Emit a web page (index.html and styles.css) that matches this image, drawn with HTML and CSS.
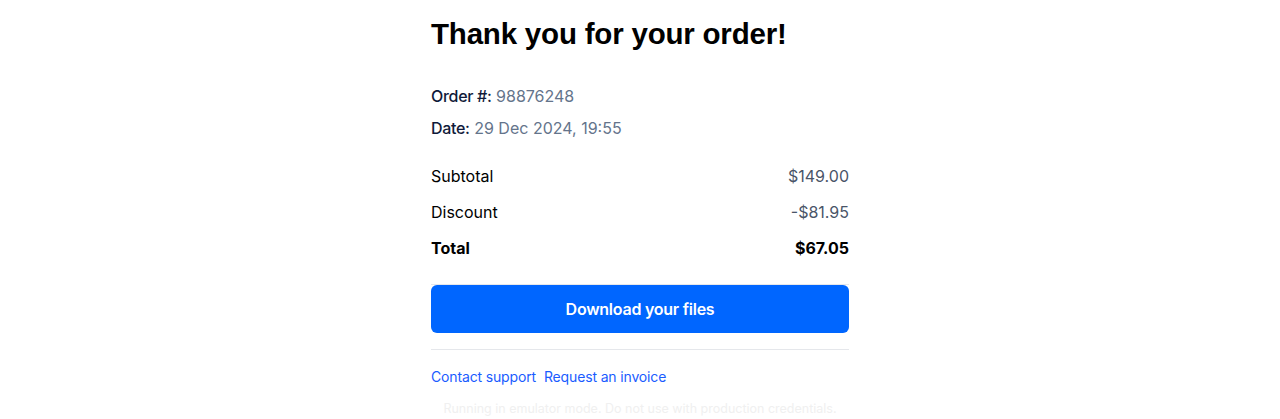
FILE: index.html
```html
<!DOCTYPE html>
<html>
<head>
<meta charset="utf-8">
<link rel="stylesheet" href="styles.css">
</head>
<body>
<main class="receipt">
  <h1 class="title">Thank you for your order!</h1>
  <div class="meta">
    <div class="meta-row"><span class="meta-label">Order #:</span> <span class="meta-value">98876248</span></div>
    <div class="meta-row"><span class="meta-label">Date:</span> <span class="meta-value">29 Dec 2024, 19:55</span></div>
  </div>
  <div class="summary">
    <div class="line"><span>Subtotal</span><span class="amount">$149.00</span></div>
    <div class="line"><span>Discount</span><span class="amount">-$81.95</span></div>
    <div class="line total"><span>Total</span><span class="amount">$67.05</span></div>
  </div>
  <div class="actions">
    <a class="btn" href="#">Download your files</a>
  </div>
  <div class="links">
    <a href="#">Contact support</a>
    <a href="#">Request an invoice</a>
  </div>
  <p class="notice">Running in emulator mode. Do not use with production credentials.</p>
</main>
</body>
</html>
```
FILE: styles.css
```css
* { box-sizing: border-box; }
html, body { margin: 0; padding: 0; background: #fff; }
body {
  font-family: Inter, "Liberation Sans", Arial, sans-serif;
  color: #000;
}
.receipt {
  width: 418px;
  margin: 0 auto;
  padding-top: 14px;
}
.title {
  margin: 0;
  font-family: "Liberation Sans", Arial, sans-serif;
  font-size: 29.5px;
  line-height: 40px;
  font-weight: 700;
  letter-spacing: -0.2px;
}
.meta {
  margin-top: 30px;
  display: flex;
  flex-direction: column;
  gap: 8px;
}
.meta-row {
  font-size: 16px;
  line-height: 24px;
}
.meta-label { color: #101a3a; font-weight: 500; letter-spacing: -0.3px; }
.meta-value { color: #64748b; }
.summary {
  margin-top: 24px;
  display: flex;
  flex-direction: column;
  gap: 12px;
}
.line {
  display: flex;
  justify-content: space-between;
  font-size: 16px;
  line-height: 24px;
}
.amount { color: #4a5568; }
.total { font-weight: 700; }
.total .amount { color: #000; }
.actions {
  margin-top: 24px;
  border-top: 1px solid #e5e7eb;
  padding-bottom: 16px;
  border-bottom: 1px solid #e5e7eb;
}
.btn {
  display: flex;
  align-items: center;
  justify-content: center;
  height: 48px;
  background: #0066ff;
  color: #fff;
  border-radius: 6px;
  text-decoration: none;
  font-size: 16px;
  font-weight: 600;
  letter-spacing: -0.25px;
}
.links {
  margin-top: 17px;
  display: flex;
  gap: 8px;
  font-size: 14px;
  line-height: 20px;
  letter-spacing: -0.15px;
}
.links a { color: #1a5cff; text-decoration: none; }
.notice {
  margin: 12px 0 0;
  text-align: center;
  white-space: nowrap;
  font-size: 12.5px;
  line-height: 20px;
  color: #f0f0f0;
}
```
